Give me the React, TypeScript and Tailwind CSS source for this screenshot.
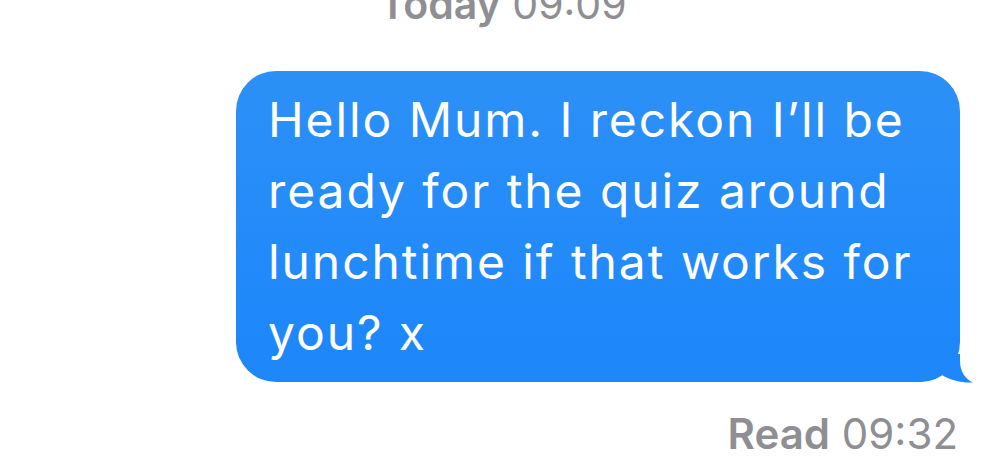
import React from "react";

export default function App() {
  return (
    <div
      className="w-[1000px] h-[462px] bg-white overflow-hidden flex flex-col"
      style={{ fontFamily: "Inter, 'Open Sans', 'Liberation Sans', sans-serif" }}
    >
      <div className="mt-[-16px] text-center text-[41px] leading-none text-[#8e8e93] pl-[6px]">
        <span className="font-semibold">Today</span> 09:09
      </div>
      <div className="flex justify-end pr-[40px] mt-[46px]">
        <div className="relative w-[724px] rounded-[40px] bg-gradient-to-b from-[#2c90f6] to-[#1e88fb] to-85% pl-[32px] pt-[13px] pb-[14px] text-white text-[48px] leading-[71px] tracking-[0.04em]">
          <div>Hello Mum. I reckon I’ll be</div>
          <div>ready for the quiz around</div>
          <div>lunchtime if that works for</div>
          <div>you? x</div>
          <svg
            className="absolute right-[-16px] bottom-[-3px]"
            width="66"
            height="31"
            viewBox="0 0 66 31"
          >
            <path
              d="M50 0 L50 7 C50 17 55 25 63 28.5 C52 29 40 26 32 21 C25 26 15 28 5 28 L5 0 Z"
              fill="#1e88fb"
            />
          </svg>
        </div>
      </div>
      <div className="flex justify-end pr-[42px] mt-[31px] text-[42px] leading-none text-[#8e8e93]">
        <span className="font-semibold">Read</span>&nbsp;09:32
      </div>
    </div>
  );
}
